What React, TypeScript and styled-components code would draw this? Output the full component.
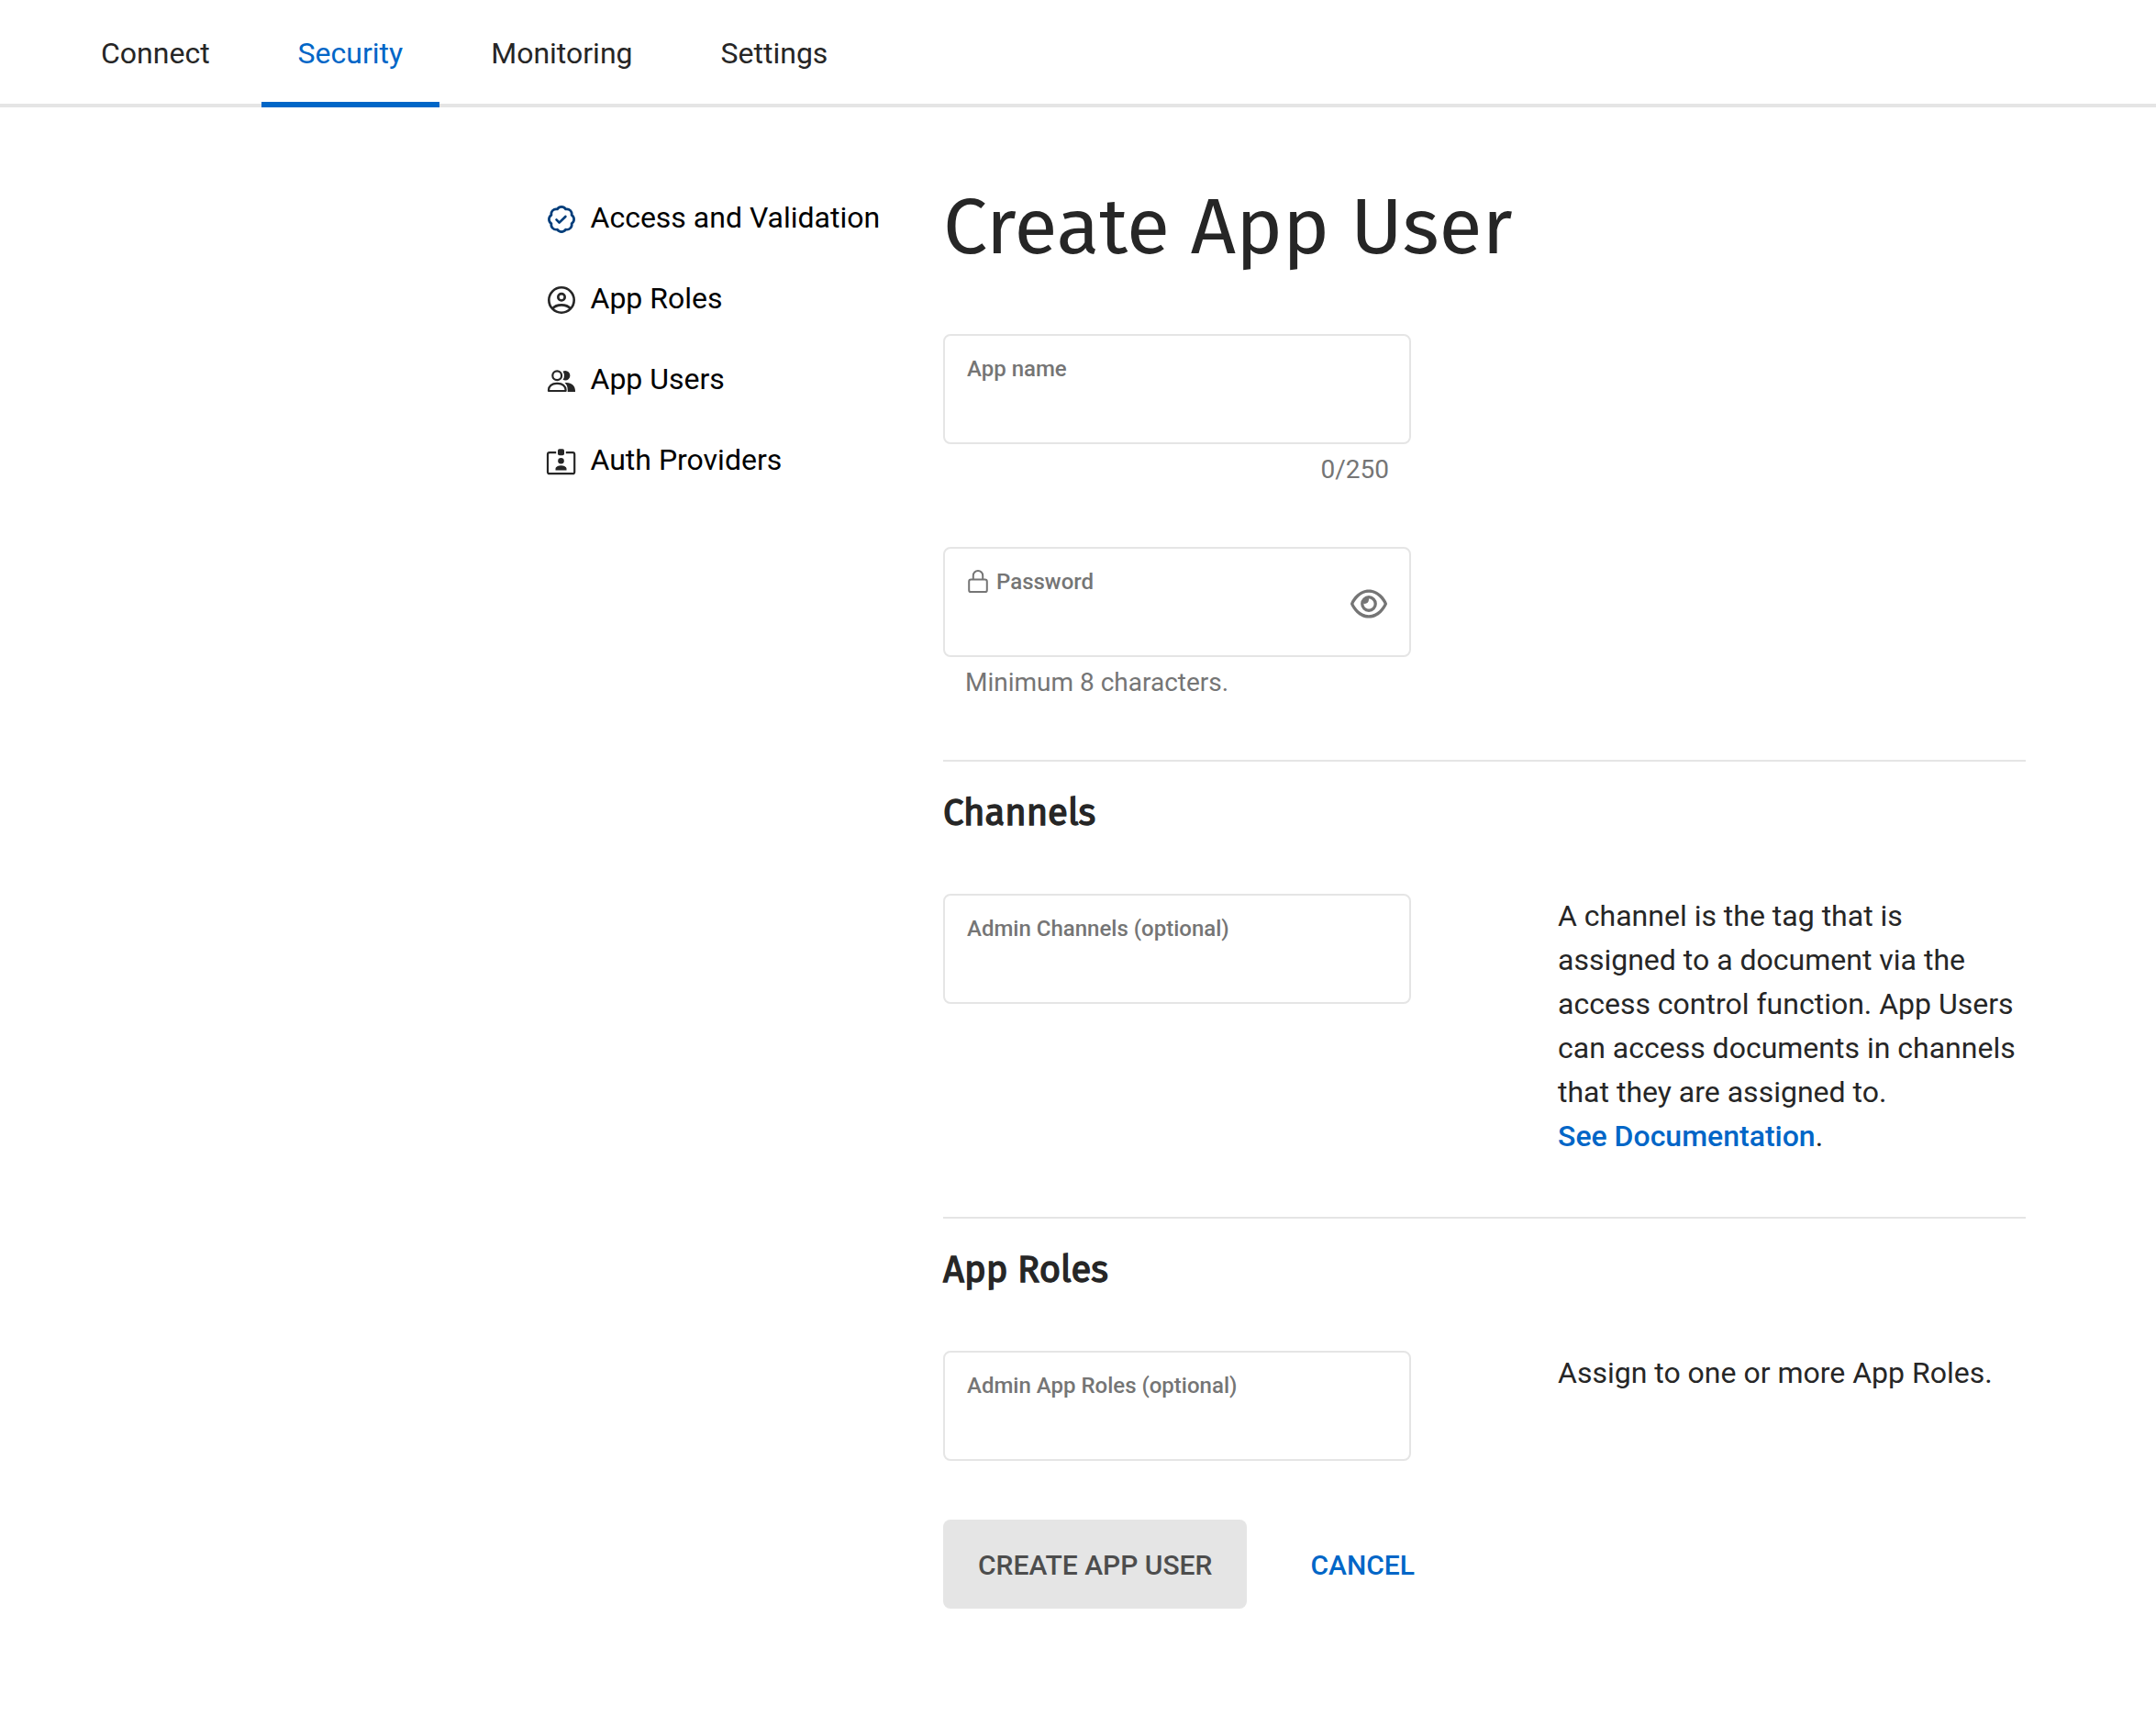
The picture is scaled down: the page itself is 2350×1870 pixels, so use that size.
import React from "react";
import styled, { createGlobalStyle } from "styled-components";
import { FaRegEye } from "react-icons/fa6";

const color = {
  text: "#262626",
  muted: "#757575",
  line: "#e5e5e5",
  blue: "#0066c7",
  navy: "#003d7a",
};

const GlobalStyle = createGlobalStyle`
  * { box-sizing: border-box; }
  body {
    margin: 0;
    background: #fff;
    color: ${color.text};
    font-family: Roboto, "Liberation Sans", sans-serif;
    font-size: 32px;
    line-height: 48px;
  }
`;

const Page = styled.div`
  width: 2350px;
  min-height: 1870px;
`;

const TabBar = styled.nav`
  display: flex;
  gap: 16px;
  height: 117px;
  padding-left: 70px;
  box-shadow: inset 0 -4px 0 ${color.line};
`;

const Tab = styled.a<{ $active?: boolean }>`
  height: 117px;
  padding: 34px 40px 0;
  color: ${(p) => (p.$active ? color.blue : color.text)};
  border-bottom: 6px solid ${(p) => (p.$active ? color.blue : "transparent")};
`;

const Body = styled.div`
  display: flex;
  padding: 80px 0 0 594px;
`;

const SideNav = styled.aside`
  display: flex;
  flex-direction: column;
  gap: 40px;
  width: 434px;
  padding-top: 16px;
`;

const SideLink = styled.a`
  display: flex;
  align-items: center;
  gap: 13.5px;
  height: 48px;
  color: #000;
  white-space: nowrap;
`;

const IconBox = styled.span`
  display: flex;
  width: 36px;
  height: 36px;
  margin-top: 4px;
  svg { display: block; }
`;

const Main = styled.main`
  width: 1180px;
`;

const Title = styled.h1`
  margin: 0;
  padding-top: 3px;
  height: 167px;
  font-family: "Fira Sans", "Noto Sans", "Open Sans", sans-serif;
  font-size: 86px;
  font-weight: 400;
  line-height: 96px;
  white-space: nowrap;
`;

const Field = styled.div`
  width: 510px;
`;

const FieldBox = styled.label`
  display: flex;
  justify-content: space-between;
  height: 120px;
  padding: 20px 24px;
  border: 2px solid ${color.line};
  border-radius: 8px;
`;

const FieldLabel = styled.span`
  display: flex;
  align-items: center;
  gap: 9px;
  height: 32px;
  color: ${color.muted};
  font-size: 24px;
  font-weight: 500;
  line-height: 32px;
`;

const EyeButton = styled.span`
  display: flex;
  align-self: center;
  padding-top: 4px;
  color: ${color.muted};
  svg {
    width: 40px;
    height: 36px;
  }
`;

const Helper = styled.div<{ $right?: boolean }>`
  padding: 8px 24px 0;
  height: 47px;
  color: ${color.muted};
  font-size: 28px;
  line-height: 40px;
  text-align: ${(p) => (p.$right ? "right" : "left")};
`;

const Credentials = styled.div`
  display: flex;
  flex-direction: column;
  gap: 65px;
  height: 464px;
`;

const Section = styled.section<{ $height: number }>`
  height: ${(p) => p.$height}px;
  border-top: 2px solid ${color.line};
`;

const SectionTitle = styled.h2`
  margin: 0;
  padding-top: 30px;
  height: 144px;
  font-family: "Fira Sans", "Noto Sans", "Open Sans", sans-serif;
  font-size: 40px;
  font-weight: 400;
  line-height: 52px;
  -webkit-text-stroke: 1.4px ${color.text};
`;

const SectionGrid = styled.div`
  display: grid;
  grid-template-columns: 510px 510px;
  column-gap: 160px;
`;

const Help = styled.p`
  margin: 0;
`;

const DocLink = styled.a`
  color: ${color.blue};
  font-weight: 500;
`;

const Actions = styled.div`
  display: flex;
  align-items: center;
  gap: 31px;
`;

const Button = styled.button<{ $filled?: boolean }>`
  height: 97px;
  padding: 2px 38px 0;
  border: 0;
  border-radius: 8px;
  background: ${(p) => (p.$filled ? color.line : "transparent")};
  color: ${(p) => (p.$filled ? "#4d4d4d" : color.blue)};
  font: 500 30px/44px Roboto, "Liberation Sans", sans-serif;
  white-space: nowrap;
`;

const BadgeIcon = () => (
  <svg width="36" height="36" viewBox="0 0 36 36" fill="none" stroke={color.navy} strokeLinecap="round" strokeLinejoin="round">
    <g transform="translate(1.7 1.7) scale(1.36)" strokeWidth="2">
      <path d="M3.85 8.62a4 4 0 0 1 4.78-4.77 4 4 0 0 1 6.74 0 4 4 0 0 1 4.78 4.78 4 4 0 0 1 0 6.74 4 4 0 0 1-4.77 4.78 4 4 0 0 1-6.75 0 4 4 0 0 1-4.78-4.77 4 4 0 0 1 0-6.76Z" />
    </g>
    <path strokeWidth="2.6" d="M12.5 18.4l3.1 3.200 6.800-6.600" />
  </svg>
);

const RoleIcon = () => (
  <svg width="36" height="36" viewBox="0 0 36 36" fill="none" stroke={color.text} strokeWidth="2.6">
    <circle cx="18" cy="18" r="13.7" />
    <circle cx="18" cy="14.8" r="3.7" />
    <path d="M8.2 27.4c2.2-2.7 5.6-4 9.8-4s7.6 1.3 9.8 4" />
  </svg>
);

const UsersIcon = () => (
  <svg width="36" height="36" viewBox="0 0 36 36" fill="none">
    <circle cx="13.2" cy="12.3" r="4.9" stroke={color.text} strokeWidth="2.2" />
    <path d="M4 29v-1c0-4.200 3.600-7.200 8.600-7.200h1.400c5 0 8.600 3 8.600 7.200v1z" stroke={color.text} strokeWidth="2.2" strokeLinejoin="round" />
    <path fill={color.text} d="M19.500 7.800c.8-.5 1.700-.7 2.700-.7a5.200 5.200 0 0 1 0 10.400c-1 0-1.900-.2-2.700-.7a8 8 0 0 0 0-9z" />
    <path fill={color.text} d="M23 20c5.800-.3 10 3.300 10 8.800V30h-8.300v-2.200c0-3.200-.8-5.800-3.200-7.600z" />
  </svg>
);

const ProviderIcon = () => (
  <svg width="36" height="36" viewBox="0 0 36 36" fill="none">
    <path d="M12.200 8.200H5a2 2 0 0 0-2 2v19a2 2 0 0 0 2 2h25.200a2 2 0 0 0 2-2v-19a2 2 0 0 0-2-2H22.800" stroke={color.text} strokeWidth="2.2" />
    <rect x="14" y="4.200" width="7" height="7" rx="1.800" fill={color.text} />
    <circle cx="17.500" cy="17.300" r="3.300" fill={color.text} />
    <path fill={color.text} d="M11.500 27.400v-1.400c0-2.300 2.600-3.800 6-3.800s6 1.500 6 3.800v1.400z" />
  </svg>
);

const LockIcon = () => (
  <svg width="23" height="26" viewBox="-1 0 23 26" fill="none" stroke={color.muted} strokeWidth="2">
    <rect x="1.200" y="10.500" width="19.600" height="13.600" rx="2.200" />
    <path d="M5.800 10.500V6.200a5.200 5.200 0 0 1 10.400 0v4.300" />
  </svg>
);

const tabs = ["Connect", "Security", "Monitoring", "Settings"];

const sideLinks = [
  { label: "Access and Validation", Icon: BadgeIcon },
  { label: "App Roles", Icon: RoleIcon },
  { label: "App Users", Icon: UsersIcon },
  { label: "Auth Providers", Icon: ProviderIcon },
];

export default function App() {
  return (
    <Page>
      <GlobalStyle />
      <TabBar>
        {tabs.map((t) => (
          <Tab key={t} $active={t === "Security"}>{t}</Tab>
        ))}
      </TabBar>
      <Body>
        <SideNav>
          {sideLinks.map(({ label, Icon }) => (
            <SideLink key={label}>
              <IconBox><Icon /></IconBox>
              {label}
            </SideLink>
          ))}
        </SideNav>
        <Main>
          <Title>Create App User</Title>
          <Credentials>
            <Field>
              <FieldBox><FieldLabel>App name</FieldLabel></FieldBox>
              <Helper $right>0/250</Helper>
            </Field>
            <Field>
              <FieldBox>
                <FieldLabel><LockIcon />Password</FieldLabel>
                <EyeButton>
                  <FaRegEye />
                </EyeButton>
              </FieldBox>
              <Helper>Minimum 8 characters.</Helper>
            </Field>
          </Credentials>
          <Section $height={498}>
            <SectionTitle>Channels</SectionTitle>
            <SectionGrid>
              <FieldBox><FieldLabel>Admin Channels (optional)</FieldLabel></FieldBox>
              <Help>
                A channel is the tag that is assigned to a document via the access control function. App Users can
                access documents in channels that they are assigned to.
                <br />
                <DocLink>See Documentation</DocLink>.
              </Help>
            </SectionGrid>
          </Section>
          <Section $height={330}>
            <SectionTitle>App Roles</SectionTitle>
            <SectionGrid>
              <FieldBox><FieldLabel>Admin App Roles (optional)</FieldLabel></FieldBox>
              <Help>Assign to one or more App Roles.</Help>
            </SectionGrid>
          </Section>
          <Actions>
            <Button $filled>CREATE APP USER</Button>
            <Button>CANCEL</Button>
          </Actions>
        </Main>
      </Body>
    </Page>
  );
}
